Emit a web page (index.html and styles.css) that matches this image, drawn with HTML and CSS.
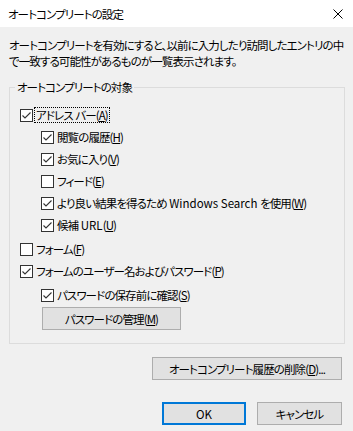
FILE: index.html
```html
<!DOCTYPE html>
<html lang="ja">
<head>
    <meta charset="UTF-8">
    <title>オートコンプリートの設定</title>
    <link rel="stylesheet" href="styles.css">
</head>
<body>

<div class="window">
    <div class="titlebar">
        <span class="title">オートコンプリートの設定</span>
        <svg class="close" viewBox="0 0 10 10"><path d="M0.5 0.5 L9.5 9.5 M9.5 0.5 L0.5 9.5" stroke="#000" stroke-width="1" fill="none"/></svg>
    </div>
    <div class="content">
        <p class="desc">オートコンプリートを有効にすると、以前に入力したり訪問したエントリの中<br>で一致する可能性があるものが一覧表示されます。</p>

        <fieldset class="group">
            <legend>オートコンプリートの対象</legend>

            <label class="check">
                <span class="box"><svg viewBox="0 0 11 11"><polyline points="1.5,5.5 4,8 9.5,2.5"/></svg></span>
                <span class="text focus">アドレス<span class="latin"> </span>バー(<u>A</u>)</span>
            </label>
            <label class="check sub">
                <span class="box"><svg viewBox="0 0 11 11"><polyline points="1.5,5.5 4,8 9.5,2.5"/></svg></span>
                <span class="text">閲覧の履歴(<u>H</u>)</span>
            </label>
            <label class="check sub">
                <span class="box"><svg viewBox="0 0 11 11"><polyline points="1.5,5.5 4,8 9.5,2.5"/></svg></span>
                <span class="text">お気に入り(<u>V</u>)</span>
            </label>
            <label class="check sub">
                <span class="box"></span>
                <span class="text">フィード(<u>E</u>)</span>
            </label>
            <label class="check sub">
                <span class="box"><svg viewBox="0 0 11 11"><polyline points="1.5,5.5 4,8 9.5,2.5"/></svg></span>
                <span class="text">より良い結果を得るため<span class="latin"> Windows Search </span>を使用(<u>W</u>)</span>
            </label>
            <label class="check sub">
                <span class="box"><svg viewBox="0 0 11 11"><polyline points="1.5,5.5 4,8 9.5,2.5"/></svg></span>
                <span class="text">候補<span class="latin"> URL</span>(<u>U</u>)</span>
            </label>

            <label class="check gap">
                <span class="box"></span>
                <span class="text">フォーム(<u>F</u>)</span>
            </label>
            <label class="check">
                <span class="box"><svg viewBox="0 0 11 11"><polyline points="1.5,5.5 4,8 9.5,2.5"/></svg></span>
                <span class="text">フォームのユーザー名およびパスワード(<u>P</u>)</span>
            </label>
            <label class="check sub gap">
                <span class="box"><svg viewBox="0 0 11 11"><polyline points="1.5,5.5 4,8 9.5,2.5"/></svg></span>
                <span class="text">パスワードの保存前に確認(<u>S</u>)</span>
            </label>

            <button class="btn manage">パスワードの管理(<u>M</u>)</button>
        </fieldset>

        <div class="actions">
            <button class="btn wide">オートコンプリート履歴の削除(<u>D</u>)...</button>
        </div>

        <div class="footer">
            <button class="btn ok"><span class="latin">OK</span></button>
            <button class="btn cancel">キャンセル</button>
        </div>
    </div>
</div>

</body>
</html>
```

FILE: styles.css
```css
body {
    margin: 0;
    background-color: #f0f0f0;
    font-family: "Noto Sans CJK JP", "Noto Sans", sans-serif;
    font-size: 11.5px;
    letter-spacing: -0.9px;
    color: #000000;
    font-feature-settings: "palt";
}
.window {
    width: 353px;
    height: 431px;
    display: flex;
    flex-direction: column;
}
.titlebar {
    height: 27px;
    flex: none;
    background-color: #ffffff;
    display: flex;
    align-items: center;
    justify-content: space-between;
    padding: 0 10px 0 8px;
}
.close {
    width: 10px;
    height: 10px;
}
.content {
    padding: 10px 8px 0 9px;
}
.desc {
    margin: 0;
    line-height: 16px;
    white-space: nowrap;
}
.latin {
    letter-spacing: 0;
}
.group {
    margin: 10px 0 0;
    padding: 9px 0 13px 0;
    border: 1px solid #dcdcdc;
}
.group legend {
    margin-left: 5px;
    padding: 0 2px;
    line-height: 16px;
}
.check {
    display: flex;
    align-items: center;
    height: 22px;
    margin-left: 10px;
    white-space: nowrap;
}
.check.sub {
    margin-left: 31px;
}
.check.gap {
    margin-top: 2px;
}
.box {
    width: 13px;
    height: 13px;
    box-sizing: border-box;
    border: 1px solid #333333;
    background-color: #ffffff;
    margin-right: 3px;
    flex: none;
}
.box svg {
    display: block;
    width: 11px;
    height: 11px;
}
.box polyline {
    fill: none;
    stroke: #333333;
    stroke-width: 1.1;
}
.text {
    line-height: 14px;
}
.text u,
.btn u {
    text-underline-offset: 1px;
}
.focus {
    margin-left: -2px;
    padding: 0 1px;
    border: 1px dotted #000000;
}
.btn {
    font: inherit;
    letter-spacing: inherit;
    font-feature-settings: "palt";
    height: 23px;
    padding: 0;
    color: #000000;
    background-color: #e1e1e1;
    border: 1px solid #adadad;
    box-sizing: border-box;
}
.manage {
    display: block;
    width: 139px;
    margin: 1px 0 0 32px;
}
.actions {
    display: flex;
    justify-content: flex-end;
    margin-top: 13px;
    padding-right: 3px;
}
.wide {
    width: 190px;
}
.footer {
    display: flex;
    justify-content: flex-end;
    gap: 11px;
    margin-top: 22px;
    padding-right: 3px;
}
.ok {
    width: 84px;
    border: 2px solid #0078d7;
}
.cancel {
    width: 85px;
}
```
